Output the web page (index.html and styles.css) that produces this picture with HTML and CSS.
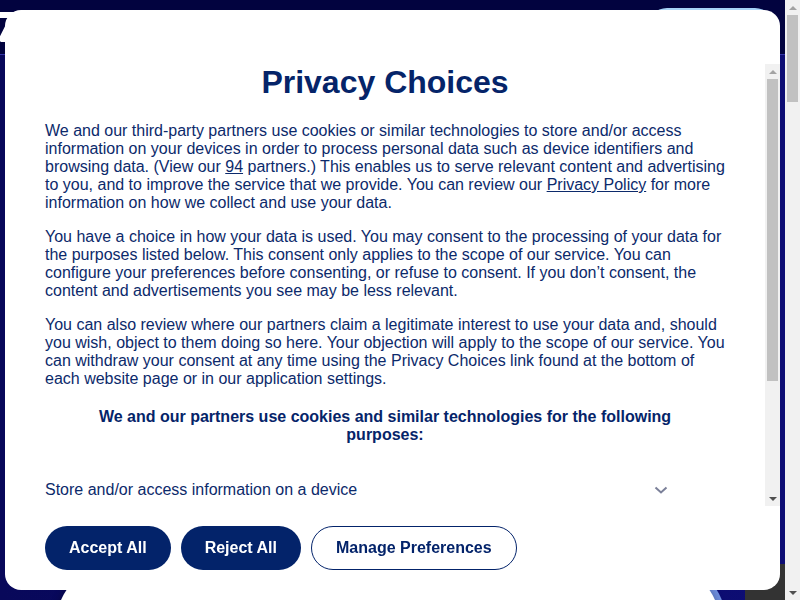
FILE: index.html
```html
<!DOCTYPE html>
<html lang="en">
<head>
<meta charset="utf-8">
<title>Privacy Choices</title>
<link rel="stylesheet" href="styles.css">
</head>
<body>
<div class="page">
  <header class="site-header">
    <svg class="logo" width="24" height="32" viewBox="0 0 24 32"><path d="M4 4 H20 L8 28 H22" fill="none" stroke="#ffffff" stroke-width="6" stroke-linejoin="round"/></svg>
    <span class="pill-btn"></span>
  </header>
  <main class="site-main">
    <div class="hero-row">
      <div class="hero-card"></div>
      <div class="side-block"></div>
    </div>
  </main>
</div>
<div class="scrollbar page-scrollbar">
  <span class="sb-arrow sb-up"></span>
  <span class="sb-track"><span class="sb-thumb page-thumb"></span></span>
  <span class="sb-arrow sb-down"></span>
</div>

<div class="modal" role="dialog" aria-label="Privacy Choices">
  <div class="modal-body">
    <div class="modal-scroll">
      <h2 class="modal-title">Privacy Choices</h2>
      <p class="modal-text">We and our third-party partners use cookies or similar technologies to store and/or access information on your devices in order to process personal data such as device identifiers and browsing data. (View our <a href="#" class="link">94</a> partners.) This enables us to serve relevant content and advertising to you, and to improve the service that we provide. You can review our <a href="#" class="link">Privacy Policy</a> for more information on how we collect and use your data.</p>
      <p class="modal-text">You have a choice in how your data is used. You may consent to the processing of your data for the purposes listed below. This consent only applies to the scope of our service. You can configure your preferences before consenting, or refuse to consent. If you don’t consent, the content and advertisements you see may be less relevant.</p>
      <p class="modal-text">You can also review where our partners claim a legitimate interest to use your data and, should you wish, object to them doing so here. Your objection will apply to the scope of our service. You can withdraw your consent at any time using the Privacy Choices link found at the bottom of each website page or in our application settings.</p>
      <h3 class="purposes-title">We and our partners use cookies and similar technologies for the following purposes:</h3>
      <ul class="purposes">
        <li class="purpose"><span>Store and/or access information on a device</span><svg class="chev" width="14" height="8" viewBox="0 0 14 8"><path d="M1.5 1.5 L7 6.5 L12.5 1.5" fill="none" stroke="#7b8099" stroke-width="2"/></svg></li>
        <li class="purpose"><span>Use limited data to select advertising</span><svg class="chev" width="14" height="8" viewBox="0 0 14 8"><path d="M1.5 1.5 L7 6.5 L12.5 1.5" fill="none" stroke="#7b8099" stroke-width="2"/></svg></li>
      </ul>
    </div>
    <div class="scrollbar modal-scrollbar">
      <span class="sb-arrow sb-up"></span>
      <span class="sb-track"><span class="sb-thumb modal-thumb"></span></span>
      <span class="sb-arrow sb-down"></span>
    </div>
  </div>
  <div class="modal-actions">
    <button class="btn btn-solid">Accept All</button>
    <button class="btn btn-solid">Reject All</button>
    <button class="btn btn-outline">Manage Preferences</button>
  </div>
</div>
</body>
</html>
```

FILE: styles.css
```css
html, body {
  margin: 0;
  padding: 0;
}
body {
  display: flex;
  height: 600px;
  overflow: hidden;
  background: #0c0c6c;
  font-family: "Liberation Sans", Arial, sans-serif;
}
.page {
  flex: 1;
  display: flex;
  flex-direction: column;
}
.site-header {
  height: 55px;
  flex: none;
  background: #02033f;
  border-bottom: 1px solid #3434a8;
  display: flex;
  align-items: flex-start;
  justify-content: space-between;
  box-sizing: border-box;
}
.logo {
  margin: 11px 0 0 -6px;
}
.pill-btn {
  display: block;
  width: 128px;
  height: 40px;
  margin: 8px 10px 0 0;
  border-radius: 20px;
  background: #a6d3f6;
}
.site-main {
  flex: 1;
  background: linear-gradient(90deg, #08085a 0%, #0d0d74 100%);
  overflow: hidden;
}
.hero-row {
  display: flex;
  align-items: flex-start;
  padding-top: 509px;
}
.hero-card {
  margin-left: 56px;
  width: 664px;
  height: 300px;
  background: #ffffff;
  border-radius: 60px;
  box-shadow: 0 0 8px rgba(0, 0, 0, 0.3), 6px -2px 0 #6f8fe0;
}
.side-block {
  margin-left: 25px;
  width: 40px;
  height: 300px;
  background: #333333;
}

/* fake classic scrollbars */
.scrollbar {
  width: 15px;
  flex: none;
  background: #f1f1f1;
  display: flex;
  flex-direction: column;
}
.page-scrollbar {
  height: 600px;
}
.sb-arrow {
  height: 15px;
  flex: none;
  display: flex;
  align-items: center;
  justify-content: center;
}
.sb-up::before {
  content: "";
  border-left: 4px solid transparent;
  border-right: 4px solid transparent;
  border-bottom: 4px solid #a3a3a3;
}
.sb-down::before {
  content: "";
  border-left: 4px solid transparent;
  border-right: 4px solid transparent;
  border-top: 4px solid #505050;
}
.sb-track {
  flex: 1;
  display: flex;
  flex-direction: column;
  align-items: center;
}
.sb-thumb {
  width: 11px;
  background: #c1c1c1;
}
.page-thumb {
  height: 87px;
}
.modal-thumb {
  height: 302px;
}

.modal {
  position: fixed;
  left: 5px;
  top: 10px;
  width: 775px;
  height: 580px;
  background: #ffffff;
  border-radius: 16px;
  display: flex;
  flex-direction: column;
  padding-top: 54px;
  box-sizing: border-box;
  color: #0c2a6b;
}
.modal-body {
  flex: 1;
  display: flex;
  min-height: 0;
}
.modal-scroll {
  flex: 1;
  overflow: hidden;
  padding: 0 40px;
}
.modal-title {
  margin: 0 0 22px;
  font-size: 32px;
  line-height: 36px;
  font-weight: bold;
  text-align: center;
  color: #052469;
}
.modal-text {
  margin: 0 0 16px;
  font-size: 16px;
  line-height: 18px;
}
.modal-text + .purposes-title {
  margin-top: 20px;
}
.link {
  color: inherit;
  text-decoration: underline;
}
.purposes-title {
  margin: 0;
  padding: 0 40px;
  font-size: 16px;
  line-height: 18px;
  font-weight: bold;
  text-align: center;
  color: #052469;
}
.purposes {
  list-style: none;
  margin: 21px 0 0;
  padding: 0;
}
.purpose {
  display: flex;
  align-items: center;
  justify-content: space-between;
  padding: 16px 57px 16px 0;
  font-size: 16px;
  line-height: 18px;
}
.chev {
  display: block;
}
.modal-actions {
  display: flex;
  gap: 10px;
  padding: 20px 40px;
}
.btn {
  height: 44px;
  border-radius: 22px;
  font-family: "Liberation Sans", Arial, sans-serif;
  font-size: 16px;
  font-weight: bold;
  padding: 0 24px;
  cursor: pointer;
}
.btn-solid {
  background: #03236a;
  color: #ffffff;
  border: none;
}
.btn-outline {
  background: #ffffff;
  color: #03236a;
  border: 1px solid #03236a;
}
```
